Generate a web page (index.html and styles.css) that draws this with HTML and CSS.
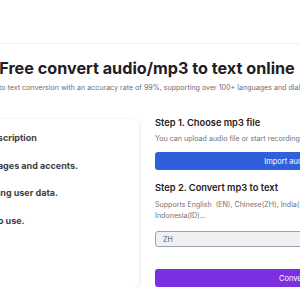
FILE: index.html
```html
<!DOCTYPE html>
<html lang="en">
<head>
  <meta charset="UTF-8">
  <meta name="viewport" content="width=device-width, initial-scale=1.0">
  <title>Free convert audio/mp3 to text online</title>
  <link rel="stylesheet" href="styles.css">
</head>
<body>
  <header class="topbar"></header>
  <div class="page">
    <h1 class="title">Free convert audio/mp3 to text online</h1>
    <p class="subtitle">Audio to text conversion with an accuracy rate of 99%, supporting over 100+ languages and dialects.</p>
    <div class="main">
      <section class="features">
        <ul>
          <li>Quick and accurate transcription</li>
          <li>Supports multiple languages and accents.</li>
          <li>Never collecting or sharing user data.</li>
          <li>Totally free and simple to use.</li>
        </ul>
      </section>
      <section class="tool">
        <h2 class="step">Step 1. Choose mp3 file</h2>
        <p class="hint">You can upload audio file or start recording</p>
        <button class="btn btn_import">Import audio file</button>
        <h2 class="step step_2">Step 2. Convert mp3 to text</h2>
        <p class="hint hint_lang">Supports English &nbsp;(EN), Chinese(ZH), India(HI), Japanese(JA), Korean(KO),<br>Indonesia(ID)...</p>
        <input class="lang" type="text" value="ZH">
        <button class="btn btn_convert">Convert</button>
      </section>
    </div>
  </div>
</body>
</html>
```
FILE: styles.css
```css
body {
  margin: 0;
  overflow: hidden;
  background: #fff;
  font-family: Inter, "Liberation Sans", sans-serif;
  color: #1f2023;
}
.topbar {
  height: 43px;
  border-bottom: 1px solid #f1f1f3;
}
.page {
  width: 568px;
  margin-left: -137px;
  text-align: center;
}
.title {
  margin: 14px 0 0;
  font-size: 16.2px;
  line-height: 20px;
  font-weight: 700;
  white-space: nowrap;
}
.subtitle {
  margin: 5px -60px 0;
  font-size: 7.1px;
  line-height: 10px;
  color: #6b6e75;
  white-space: nowrap;
}
.main {
  display: grid;
  grid-template-columns: 276px 276px;
  gap: 16px;
  margin-top: 26px;
  text-align: left;
}
.features {
  height: 169px;
  box-sizing: border-box;
  padding: 13px 22px 12px 30px;
  background: #fff;
  border-radius: 6px;
  box-shadow: 0 1px 4px rgba(0, 0, 0, 0.12);
}
.features ul {
  margin: 0;
  padding: 0;
  list-style: none;
}
.features li {
  font-size: 9px;
  line-height: 12px;
  font-weight: 700;
  color: #3d3f44;
  margin-bottom: 15.5px;
  white-space: nowrap;
}
.tool {
  display: flex;
  flex-direction: column;
}
.step {
  margin: -2px 0 0;
  font-size: 9.3px;
  line-height: 12px;
  font-weight: 600;
  color: #1f2023;
}
.step_2 {
  margin-top: 12px;
}
.hint {
  margin: 5px 0 0;
  font-size: 7.1px;
  line-height: 10px;
  color: #70737a;
}
.hint_lang {
  margin-top: 5px;
  line-height: 11px;
}
.btn {
  height: 18px;
  border: 0;
  border-radius: 3px;
  color: #fff;
  font-family: inherit;
  font-size: 7.5px;
  padding: 0;
}
.btn_import {
  margin-top: 8px;
  background: #2f5fda;
}
.btn_convert {
  margin-top: 22px;
  background: #7b2fe0;
}
.lang {
  margin-top: 10px;
  height: 16px;
  box-sizing: border-box;
  padding: 0 7px;
  border: 1px solid #9ba2ad;
  border-radius: 3px;
  background: #eef0f4;
  font-family: inherit;
  font-size: 7.1px;
  color: #55585e;
}
```
